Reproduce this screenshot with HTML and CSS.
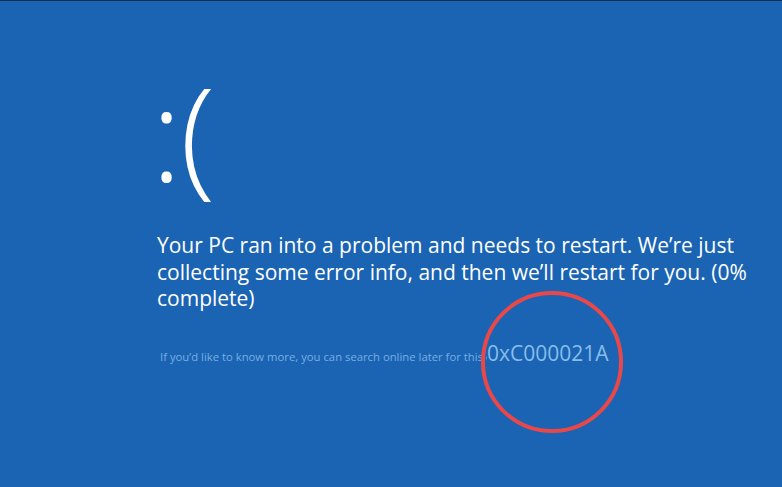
FILE: index.html
```html
<!DOCTYPE html>
<html lang="en">
  <head>
    <meta charset="UTF-8" />
    <meta name="viewport" content="width=device-width, initial-scale=1.0" />
    <title>Stop Error</title>
    <link rel="stylesheet" href="styles.css">
  </head>
  <body>
    <div class="screen">
      <div class="face">:(</div>
      <p class="message">
        Your PC ran into a problem and needs to restart. We’re just
        collecting some error info, and then we’ll restart for you. (0%
        complete)
      </p>
      <div class="details">
        <span class="hint">If you’d like to know more, you can search online later for this error: </span>
        <span class="code">
          0xC000021A
          <svg class="ring" width="150" height="150" viewBox="0 0 150 150">
            <circle cx="75" cy="75" r="69" fill="none" stroke="#e9484b" stroke-width="4" />
          </svg>
        </span>
      </div>
    </div>
  </body>
</html>
```

FILE: styles.css
```css
body {
  margin: 0;
  padding: 0;
  background: #1a64b3;
  overflow: hidden;
}
.screen {
  height: 486px;
  border-top: 1px solid #1a2f4f;
  padding: 0 0 0 157px;
  font-family: "Open Sans", "Noto Sans", sans-serif;
  color: #ffffff;
}
.face {
  margin-top: 66px;
  margin-left: -6px;
  font-size: 130px;
  font-weight: 300;
  line-height: 130px;
  height: 130px;
  letter-spacing: -2px;
}
.message {
  margin: 35px 0 0;
  width: 610px;
  font-size: 21px;
  line-height: 26.5px;
}
.details {
  display: flex;
  align-items: baseline;
  margin-top: 27px;
  padding-left: 3px;
}
.hint {
  width: 327px;
  overflow: hidden;
  white-space: nowrap;
  font-size: 11.3px;
  color: #78aee2;
}
.code {
  position: relative;
  font-size: 21px;
  color: #88bdeb;
}
.ring {
  position: absolute;
  left: -10px;
  top: -52px;
}
```
